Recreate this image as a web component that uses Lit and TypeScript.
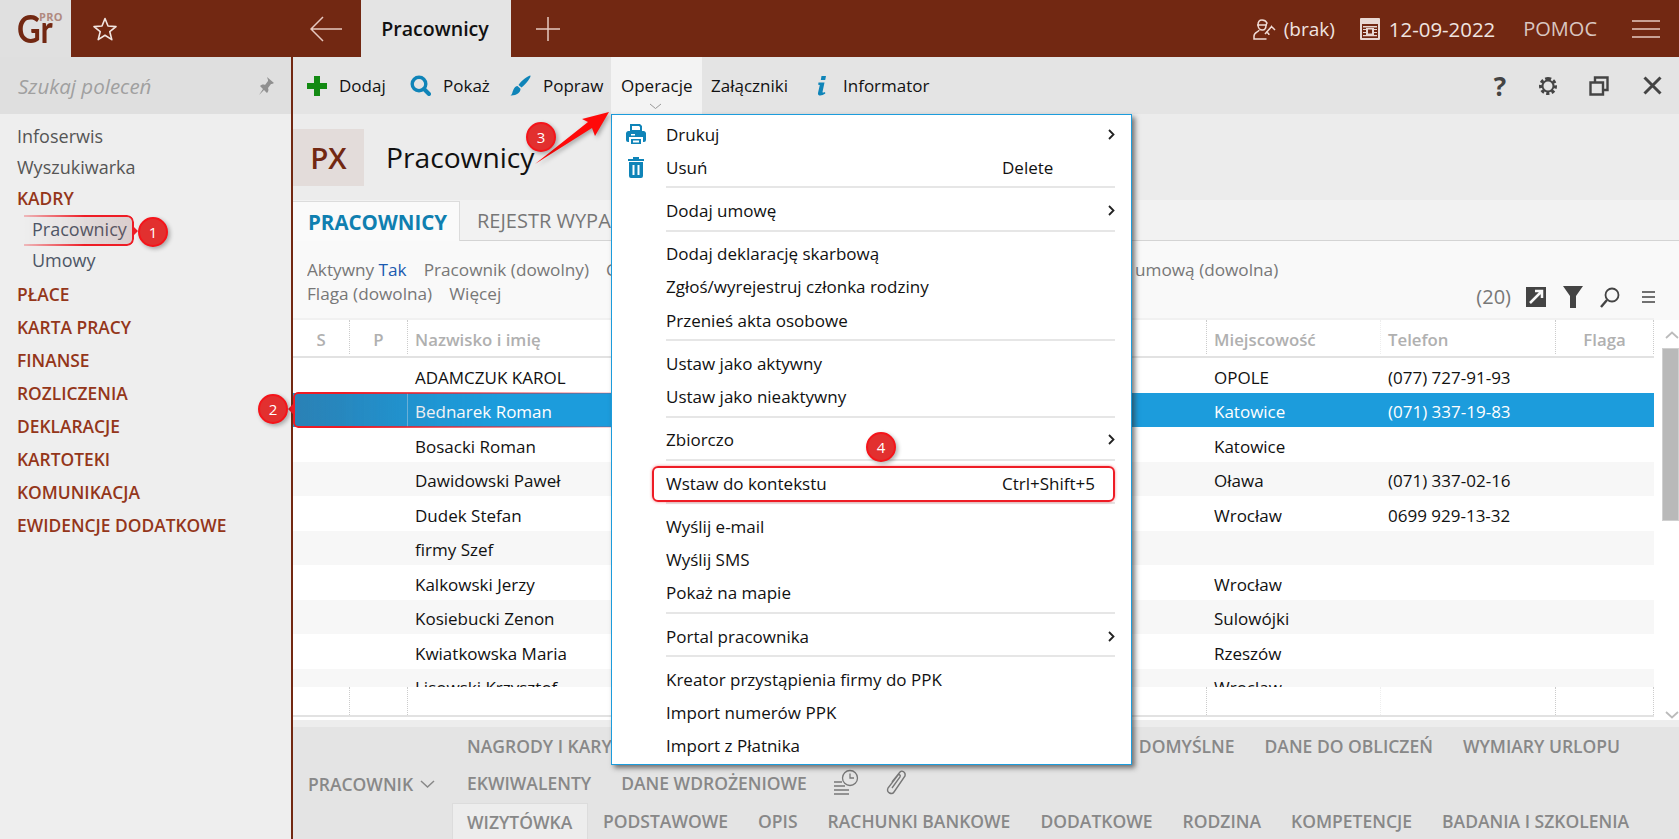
import { LitElement, html, css, svg } from "lit";
import { customElement } from "lit/decorators.js";

const rows = [
  ["ADAMCZUK KAROL", "OPOLE", "(077) 727-91-93"],
  ["Bednarek Roman", "Katowice", "(071) 337-19-83"],
  ["Bosacki Roman", "Katowice", ""],
  ["Dawidowski Paweł", "Oława", "(071) 337-02-16"],
  ["Dudek Stefan", "Wrocław", "0699 929-13-32"],
  ["firmy Szef", "", ""],
  ["Kalkowski Jerzy", "Wrocław", ""],
  ["Kosiebucki Zenon", "Sulowójki", ""],
  ["Kwiatkowska Maria", "Rzeszów", ""],
  ["Lisowski Krzysztof", "Wrocław", ""],
];

type Item = { t: string; s?: string; a?: boolean; i?: string; box?: boolean } | null;
const menu: Item[] = [
  { t: "Drukuj", a: true, i: "print" },
  { t: "Usuń", s: "Delete", i: "trash" },
  null,
  { t: "Dodaj umowę", a: true },
  null,
  { t: "Dodaj deklarację skarbową" },
  { t: "Zgłoś/wyrejestruj członka rodziny" },
  { t: "Przenieś akta osobowe" },
  null,
  { t: "Ustaw jako aktywny" },
  { t: "Ustaw jako nieaktywny" },
  null,
  { t: "Zbiorczo", a: true },
  null,
  { t: "Wstaw do kontekstu", s: "Ctrl+Shift+5", box: true },
  null,
  { t: "Wyślij e-mail" },
  { t: "Wyślij SMS" },
  { t: "Pokaż na mapie" },
  null,
  { t: "Portal pracownika", a: true },
  null,
  { t: "Kreator przystąpienia firmy do PPK" },
  { t: "Import numerów PPK" },
  { t: "Import z Płatnika" },
];

const icons: Record<string, unknown> = {
  print: svg`<svg width="22" height="22" viewBox="0 0 22 22"><path fill="#0f84b8" fill-rule="evenodd" d="M5 1h10l2 2v5H5zM7 3v4h8V4l-1-1z"/><path fill="#0f84b8" d="M3 8h16a3 3 0 0 1 2 2v7a2 2 0 0 1-2 2h-1v-5H4v5H3a2 2 0 0 1-2-2v-7a3 3 0 0 1 2-2z"/><path fill="#0f84b8" fill-rule="evenodd" d="M6 16h10v5H6zM8 17.500v2h6v-2z"/><path fill="#fff" d="M6 11h4v1.500H6z"/></svg>`,
  trash: svg`<svg width="22" height="22" viewBox="0 0 22 22"><path fill="#0f84b8" fill-rule="evenodd" d="M3 3h5V1h6v2h5v2H3zM4 6h14v14a2 2 0 0 1-2 2H6a2 2 0 0 1-2-2zM7.500 9v10h2V9zm5 0v10h2V9z"/></svg>`,
};

@customElement("app-root")
export class AppRoot extends LitElement {
  static styles = css`
    :host { display: block; position: relative; width: 100%; height: 100vh; overflow: hidden; font-family: "Open Sans", sans-serif; font-size: 17px; color: #111; background: #ededed; }
    svg { display: block; flex: none; }
    .top { display: flex; height: 57px; background: #722812; color: #f0e4e0; align-items: center; }
    .logo { width: 71px; height: 57px; background: #e0e0e0; position: relative; flex: none; }
    .gr { position: absolute; left: 17px; top: 5px; font-size: 38px; font-weight: 700; color: #722812; line-height: 46px; font-family: "Lato", sans-serif; transform: scaleX(.86); transform-origin: left center; }
    .pro { position: absolute; left: 39px; top: 11px; font-size: 11px; font-weight: 700; color: #b08a80; letter-spacing: .3px; line-height: 12px; }
    .star { margin-left: 21px; }
    .back { margin-left: 192px; }
    .ttab { margin-left: 19px; width: 150px; height: 57px; background: #e4e4e4; color: #111; display: flex; align-items: center; justify-content: center; font-size: 19.600px; font-weight: 600; flex: none; padding-right: 2px; box-sizing: border-box; }
    .plus { margin-left: 25px; }
    .grow { flex: 1; }
    .person { margin-right: 8px; }
    .brak { font-size: 19px; margin-right: 25px; }
    .cal { margin-right: 9px; }
    .date { font-size: 20.400px; margin-right: 28px; }
    .help { font-size: 20px; color: #d9c6c0; margin-right: 35px; }
    .burger { margin-right: 19px; }

    .body { display: flex; height: 782px; }
    .side { width: 291px; flex: none; border-right: 2px solid #722812; background: #eeeeee; position: relative; }
    .search { height: 57px; background: #dfdfdf; display: flex; align-items: center; padding: 0 16px 0 18px; justify-content: space-between; font-style: italic; font-size: 20.500px; color: #a0a0a0; }
    .nav { padding-top: 7px; }
    .nav div { height: 31px; line-height: 31px; padding-left: 17px; color: #555; font-size: 18px; }
    .nav .sec { color: #94361a; font-weight: 600; font-size: 17.400px; height: 33.050px; line-height: 33.050px; }
    .nav .sec.k { height: 31px; line-height: 31px; }
    .nav .sub { padding-left: 32px; color: #4d5666; height: 31px; }
    .nav .sec.sp { margin-top: 2px; }

    .main { flex: 1; min-width: 0; display: flex; flex-direction: column; }
    .tools { height: 57px; background: #e4e4e4; display: flex; align-items: center; flex: none; position: relative; }
    .tool { display: flex; align-items: center; height: 57px; line-height: 55px; }
    .tool svg { margin-right: 12px; }
    .t1 { margin-left: 14px; width: 103px; }
    .t2 { width: 100px; }
    .t3 { width: 101px; }
    .op { width: 91px; background: #f3f3f3; padding-left: 10px; box-sizing: border-box; position: relative; }
    .op svg { position: absolute; left: 38px; top: 46px; margin: 0; }
    .t5 { margin-left: 9px; width: 106px; }
    .t6 svg { margin-right: 16px; }
    .tr { position: absolute; right: 0; top: 0; height: 57px; display: flex; align-items: center; }
    .q { font-size: 26px; font-weight: 700; color: #444; width: 14px; text-align: center; margin-right: 31px; }
    .gear { margin-right: 31px; }
    .rest { margin-right: 34px; }
    .clos { margin-right: 17px; }
    .head { height: 86px; flex: none; background: #ececec; display: flex; align-items: center; }
    .px { width: 71px; height: 57px; background: #e3dcda; color: #722812; font-size: 29.500px; font-weight: 600; display: flex; align-items: center; justify-content: center; margin-top: 1px; }
    .ht { margin-left: 22px; font-size: 28.200px; color: #111; }
    .tabs { height: 40px; flex: none; background: #f2f2f2; border-bottom: 1px solid #d4d4d4; display: flex; align-items: stretch; font-size: 20px; }
    .tab { padding: 0 17px; display: flex; align-items: center; color: #777; white-space: nowrap; }
    .tab.on { color: #0f7fb0; font-weight: 700; background: #fafafa; border: 1px solid #dcdcdc; border-bottom: none; border-left: none; width: 167px; box-sizing: border-box; margin-top: 1px; margin-bottom: -1px; padding: 0 0 0 15px; font-size: 20.500px; }
    .filters { height: 79px; flex: none; background: #f9f9f9; padding: 17px 14px 0; box-sizing: border-box; position: relative; color: #777; font-size: 17.200px; line-height: 24px; }
    .fr { display: flex; }
    .fl { display: flex; width: 828px; flex: none; overflow: hidden; white-space: nowrap; }
    .fr span { margin-right: 17px; }
    .fr b { font-weight: 400; color: #1c5bb0; }
    .ftools { position: absolute; right: 24px; top: 44px; display: flex; align-items: center; height: 24px; }
    .cnt { font-size: 20px; margin-right: 15px; }
    .ftools svg { margin-right: 17px; }
    .ftools svg:last-child { margin-left: 5px; margin-right: 0; }
    .ta { height: 400px; flex: none; background: #fff; display: flex; position: relative; }
    .tb { width: 1361px; flex: none; display: flex; flex-direction: column; }
    .gr6 { display: grid; grid-template-columns: 57px 58px 799px 174px 175px 98px; }
    .th { height: 36px; border-bottom: 2px solid #e2e2e2; font-weight: 600; color: #b0b0b0; font-size: 16.800px; line-height: 40px; border-top: 2px solid #f1f1f1; margin-top: -2px; flex: none; }
    .th > div { border-right: 1px dotted #ccc; padding-left: 7px; box-sizing: border-box; height: 34px; }
    .th > div:nth-child(4) { border-right-color: #eee; }
    .th > .c { text-align: center; padding: 0; }
    .th > .r { text-align: center; padding-left: 0; }
    .rws { height: 329px; overflow: hidden; flex: none; }
    .row { height: 34.500px; font-size: 17px; }
    .row > div { padding: 3.500px 0 0 7px; white-space: nowrap; line-height: 31px; }
    .row.alt { background: #f7f7f7; }
    .row.sel { background: #1c9cdc; color: #fff; }
    .row.sel > div:nth-child(3) { border-left: 1px solid #6fbde6; margin-left: -1px; }
    .fill { flex: 1; border-bottom: 2px solid #e2e2e2; margin-bottom: 3px; }
    .fill > div { border-right: 1px dotted #ccc; }
    .fill > div:nth-child(4) { border-right-color: #eee; }
    .sb { flex: 1; position: relative; }
    .thumb { position: absolute; left: 8px; right: 0; top: 28px; height: 173px; background: #b9b9b9; border: 1px solid #d0d0d0; box-sizing: border-box; }
    .sb svg { position: absolute; left: 11px; }
    .s1 { top: 11px; }
    .s2 { top: 391px; }
    .gapb { height: 7px; flex: none; background: #ededed; }
    .bot { flex: 1; background: #e4e4e4; display: flex; color: #888; font-weight: 600; font-size: 17.500px; }
    .bl { width: 160px; flex: none; padding: 45px 0 0 15px; box-sizing: border-box; display: flex; align-items: flex-start; line-height: 24px; }
    .bl svg { margin: 8px 0 0 7px; }
    .br { flex: 1; }
    .bi { display: flex; height: 37px; align-items: center; padding-left: 14px; }
    .bi span { margin-right: 30px; white-space: nowrap; }
    .bi .skip { margin-left: 497px; }
    .bi.last { height: 36px; padding-left: 0; margin-top: 2px; }
    .bi svg { margin-right: 24px; }
    .clock { margin-left: -4px; }
    .wiz { background: #ededed; border: 1px solid #dcdcdc; border-bottom: none; height: 36px; width: 136px; box-sizing: border-box; display: flex; align-items: center; padding-left: 14px; margin: 0 15px 0 -1px; flex: none; }

    .menu { position: absolute; left: 611px; top: 114px; width: 521px; height: 651px; box-sizing: border-box; background: #fff; border: 1px solid #1c9cdc; box-shadow: 3px 3px 5px rgba(50,50,50,.65); padding-top: 2.500px; font-size: 17px; }
    .mit { height: 33.100px; display: flex; align-items: center; position: relative; padding-right: 16px; }
    .mic { width: 54px; flex: none; display: flex; padding-left: 13px; box-sizing: border-box; }
    .ml { flex: 1; }
    .ms { width: 113px; flex: none; }
    .arr { position: absolute; right: 16px; top: 11px; }
    .sep { height: 2px; background: #e6e6e6; margin: 2.650px 16px 5.650px 54px; }
    .box { position: absolute; left: 40px; right: 16px; top: -1px; bottom: -2px; border: 2px solid #ee1c25; border-radius: 6px; box-shadow: 0 0 3px rgba(238,28,37,.5); }

    .badge { position: absolute; width: 30px; height: 30px; border-radius: 50%; background: #e2302f; border: 2px solid #f5141a; box-sizing: border-box; color: #fff; display: flex; align-items: center; justify-content: center; font-size: 15px; box-shadow: 2px 2px 4px rgba(0,0,0,.3); }
    .b1 { left: 138px; top: 217px; }
    .b2 { left: 258px; top: 394px; }
    .b3 { left: 526px; top: 122px; }
    .b4 { left: 866px; top: 432px; }
    .a1 { position: absolute; left: 24px; top: 215px; width: 110px; height: 31px; box-sizing: border-box; border: 2px solid #ee1c25; border-left: none; border-radius: 0 7px 7px 0; background: linear-gradient(90deg, rgba(150,90,90,.02), rgba(150,90,90,.22)); -webkit-mask-image: linear-gradient(90deg, rgba(0,0,0,.25), #000 55%); mask-image: linear-gradient(90deg, rgba(0,0,0,.25), #000 55%); }
    .a2 { position: absolute; left: 293px; top: 392px; width: 340px; height: 36px; box-sizing: border-box; border: 2px solid #ee1c25; border-right: none; border-radius: 5px 0 0 5px; -webkit-mask-image: linear-gradient(90deg, #000 15%, rgba(0,0,0,.1) 100%); mask-image: linear-gradient(90deg, #000 15%, rgba(0,0,0,.1) 100%); background: linear-gradient(90deg, rgba(70,80,110,.35), rgba(70,80,110,0) 60%); }
    .over { position: absolute; left: 0; top: 0; pointer-events: none; }
    .wedge { filter: drop-shadow(2px 2px 2px rgba(0,0,0,.3)); }
  `;

  render() {
    return html`
      <div class="top">
        <div class="logo"><span class="gr">Gr</span><span class="pro">PRO</span></div>
        <svg class="star" width="26" height="26" viewBox="0 0 26 26"><path fill="none" stroke="#f2e6e2" stroke-width="1.600" stroke-linejoin="round" d="M13 2.500l3 7.500 8 .6-6.200 5.100 2 7.900L13 19.300l-6.800 4.300 2-7.900L2 10.600l8-.6z"/></svg>
        <svg class="back" width="32" height="26" viewBox="0 0 32 26"><path fill="none" stroke="#e6c9c0" stroke-width="1.500" d="M32 13H1M13 1L1 13l12 12"/></svg>
        <div class="ttab">Pracownicy</div>
        <svg class="plus" width="24" height="24" viewBox="0 0 24 24"><path stroke="#e6c9c0" stroke-width="1.500" d="M12 0v24M0 12h24"/></svg>
        <div class="grow"></div>
        <svg class="person" width="23" height="22" viewBox="0 0 23 22"><path fill="none" stroke="#f0dcd6" stroke-width="1.500" d="M5 7c0-3 1.500-5 4-5s4 1 5 3l-1 2c0 3-1 5-3.500 5S5 10 5 7zM4 7h10M6 12c0 2-5 2-5 6v3h12.500M13 14c2 1 3 1 3 3M18 8l4 4M19 8l-7 8"/></svg>
        <span class="brak">(brak)</span>
        <svg class="cal" width="20" height="22" viewBox="0 0 20 22"><path fill="#e8d8d3" fill-rule="evenodd" d="M1 0h18a1 1 0 0 1 1 1v20a1 1 0 0 1-1 1H1a1 1 0 0 1-1-1V1a1 1 0 0 1 1-1zM2 6v14h16V6z"/><path fill="#e8d8d3" d="M3 8h14v1.500H3zM3 11h14v1H3zM3 14h14v1H3zM3 17h14v1.200H3z"/><path fill="#e8d8d3" d="M6 10h8v7H6z"/><path fill="#722812" d="M8 11.500h4v4H8z"/></svg>
        <span class="date">12-09-2022</span>
        <span class="help">POMOC</span>
        <svg class="burger" width="28" height="20" viewBox="0 0 28 20"><path stroke="#e6c9c0" stroke-width="1.600" d="M0 2h28M0 10h28M0 18h28"/></svg>
      </div>
      <div class="body">
        <div class="side">
          <div class="search"><span>Szukaj poleceń</span>
            <svg width="18" height="20" viewBox="0 0 18 20"><path fill="#909090" d="M10 1l7 6-2 1-1 0-3 4c1 2 0 4-1 5l-3-3-5 5 4-6-3-3c1-1 3-2 5-1l3-4 0-1z"/></svg>
          </div>
          <div class="nav">
            <div>Infoserwis</div>
            <div>Wyszukiwarka</div>
            <div class="sec k">KADRY</div>
            <div class="sub">Pracownicy</div>
            <div class="sub">Umowy</div>
            <div class="sec sp">PŁACE</div>
            <div class="sec">KARTA PRACY</div>
            <div class="sec">FINANSE</div>
            <div class="sec">ROZLICZENIA</div>
            <div class="sec">DEKLARACJE</div>
            <div class="sec">KARTOTEKI</div>
            <div class="sec">KOMUNIKACJA</div>
            <div class="sec">EWIDENCJE DODATKOWE</div>
          </div>
        </div>
        <div class="main">
          <div class="tools">
            <div class="tool t1"><svg width="20" height="20" viewBox="0 0 20 20"><path fill="#138a13" d="M7 0h6v7h7v6h-7v7H7v-7H0V7h7z"/></svg>Dodaj</div>
            <div class="tool t2"><svg width="21" height="21" viewBox="0 0 21 21"><circle cx="9" cy="9" r="6.800" fill="none" stroke="#0f84b8" stroke-width="3.400"/><path stroke="#0f84b8" stroke-width="4" stroke-linecap="round" d="M14 14l5 5"/></svg>Pokaż</div>
            <div class="tool t3"><svg width="21" height="21" viewBox="0 0 21 21"><path fill="#0f84b8" d="M20.500.5c.5 2-4 8-9 12l-3-2.500C11 6 18 .5 20.500.5zM7.500 11l3 2.800c0 4-4 7-10 6.700 2-1 1.500-3 3-6 .7-1.800 2.500-3.500 4-3.500z"/></svg>Popraw</div>
            <div class="tool op">Operacje<svg width="13" height="7" viewBox="0 0 13 7"><path fill="none" stroke="#999" d="M1 1l5.500 4.500L12 1"/></svg></div>
            <div class="tool t5">Załączniki</div>
            <div class="tool t6"><svg width="10" height="20" viewBox="0 0 10 20"><path fill="#0f84b8" d="M4.500 0h4.500l-.8 4H3.800zM1.500 6.500H7.500L5.500 16c0 .8 1 .8 2.500 0l.3 1.500C5 20 .5 20.500 1 17L2.800 9 1.200 8.700z"/></svg>Informator</div>
            <div class="tr">
              <span class="q">?</span>
              <svg class="gear" width="20" height="20" viewBox="0 0 20 20"><path fill="none" stroke="#444" stroke-width="3" stroke-dasharray="3.200 2.300" d="M10 2.500a7.500 7.500 0 1 1 0 15 7.500 7.500 0 1 1 0-15z"/><circle cx="10" cy="10" r="5.500" fill="none" stroke="#444" stroke-width="2"/></svg>
              <svg class="rest" width="20" height="20" viewBox="0 0 20 20"><path fill="none" stroke="#444" stroke-width="2.400" d="M6 6V1.500h12.500V14H14M1.500 6.500H14v12H1.500z"/></svg>
              <svg class="clos" width="19" height="19" viewBox="0 0 19 19"><path stroke="#444" stroke-width="3" d="M1.500 1.500l16 16M17.500 1.500l-16 16"/></svg>
            </div>
          </div>
          <div class="head"><div class="px">PX</div><div class="ht">Pracownicy</div></div>
          <div class="tabs"><div class="tab on">PRACOWNICY</div><div class="tab">REJESTR WYPADKÓW</div></div>
          <div class="filters">
            <div class="fr"><div class="fl"><span>Aktywny <b>Tak</b></span><span>Pracownik (dowolny)</span><span>Cecha (dowolna)</span></div><span>umową (dowolna)</span></div>
            <div class="fr"><span>Flaga (dowolna)</span><span>Więcej</span></div>
            <div class="ftools">
              <span class="cnt">(20)</span>
              <svg width="20" height="20" viewBox="0 0 20 20"><path fill="#444" d="M0 0h20v20H0z"/><path stroke="#f9f9f9" stroke-width="2.500" fill="none" d="M4 16L15 5M9 4h7v7"/></svg>
              <svg width="20" height="22" viewBox="0 0 20 22"><path fill="#444" d="M0 0h20l-7 10v12H7V10z"/></svg>
              <svg width="20" height="21" viewBox="0 0 20 21"><circle cx="12" cy="8" r="6.500" fill="none" stroke="#444" stroke-width="1.800"/><path stroke="#444" stroke-width="2.400" d="M7 13l-6 7"/></svg>
              <svg width="13" height="12" viewBox="0 0 13 12"><path stroke="#444" stroke-width="1.300" d="M0 1h13M0 6h13M0 11h13"/></svg>
            </div>
          </div>
          <div class="ta">
            <div class="tb">
              <div class="gr6 th"><div class="c">S</div><div class="c">P</div><div>Nazwisko i imię</div><div>Miejscowość</div><div>Telefon</div><div class="r">Flaga</div></div>
              <div class="rws">
                ${rows.map((r, i) => html`<div class="gr6 row ${i === 1 ? "sel" : ""} ${i > 2 && i % 2 === 1 ? "alt" : ""}"><div></div><div></div><div>${r[0]}</div><div>${r[1]}</div><div>${r[2]}</div><div></div></div>`)}
              </div>
              <div class="gr6 fill"><div></div><div></div><div></div><div></div><div></div><div></div></div>
            </div>
            <div class="sb">
              <svg class="s1" width="14" height="8" viewBox="0 0 14 8"><path fill="none" stroke="#bbb" stroke-width="1.800" d="M1 7l6-5.500L13 7"/></svg>
              <div class="thumb"></div>
              <svg class="s2" width="14" height="8" viewBox="0 0 14 8"><path fill="none" stroke="#bbb" stroke-width="1.800" d="M1 1l6 5.500L13 1"/></svg>
            </div>
          </div>
          <div class="gapb"></div>
          <div class="bot">
            <div class="bl">PRACOWNIK<svg width="15" height="9" viewBox="0 0 15 9"><path fill="none" stroke="#888" stroke-width="1.500" d="M1 1l6.500 6L14 1"/></svg></div>
            <div class="br">
              <div class="bi"><span>NAGRODY I KARY</span><span class="skip">DOMYŚLNE</span><span>DANE DO OBLICZEŃ</span><span>WYMIARY URLOPU</span></div>
              <div class="bi"><span>EKWIWALENTY</span><span>DANE WDROŻENIOWE</span>
                <svg class="clock" width="27" height="27" viewBox="0 0 27 27"><g fill="none" stroke="#777" stroke-width="1.300"><circle cx="17" cy="9" r="7.500"/><path d="M17 4.500V9h4M1 13h8M1 17h11M1 21h15M1 25h15"/></g></svg>
                <svg width="26" height="28" viewBox="0 0 26 28"><path fill="none" stroke="#777" stroke-width="1.400" d="M8 13l8-10c2-2 6 0 5 4L10 23c-2 3-8 1-6-4L14 6c1-1 3 0 2 2L8 19"/></svg>
              </div>
              <div class="bi last"><div class="wiz">WIZYTÓWKA</div><span>PODSTAWOWE</span><span>OPIS</span><span>RACHUNKI BANKOWE</span><span>DODATKOWE</span><span>RODZINA</span><span>KOMPETENCJE</span><span>BADANIA I SZKOLENIA</span></div>
            </div>
          </div>
        </div>
      </div>

      <div class="a1"></div>
      <div class="a2"></div>
      <div class="menu">
        ${menu.map((m) =>
          m === null
            ? html`<div class="sep"></div>`
            : html`<div class="mit">
                <div class="mic">${m.i ? icons[m.i] : ""}</div>
                <div class="ml">${m.t}</div>
                ${m.s ? html`<div class="ms">${m.s}</div>` : ""}
                ${m.a ? html`<svg class="arr" width="7" height="11" viewBox="0 0 7 11"><path fill="none" stroke="#222" stroke-width="1.800" d="M1 1l4.500 4.500L1 10"/></svg>` : ""}
                ${m.box ? html`<div class="box"></div>` : ""}
              </div>`
        )}
      </div>
      <svg class="over" width="1679" height="839" viewBox="0 0 1679 839">
        <path class="wedge" fill="#ff0a0a" d="M535 164L588 122L582 119L609 112L595 136L592 128Z"/>
        <path fill="#ee1c25" d="M133 226l5 5-5 5zM293 404l-5 5 5 5z"/>
      </svg>
      <div class="badge b1">1</div>
      <div class="badge b2">2</div>
      <div class="badge b3">3</div>
      <div class="badge b4">4</div>
    `;
  }
}
